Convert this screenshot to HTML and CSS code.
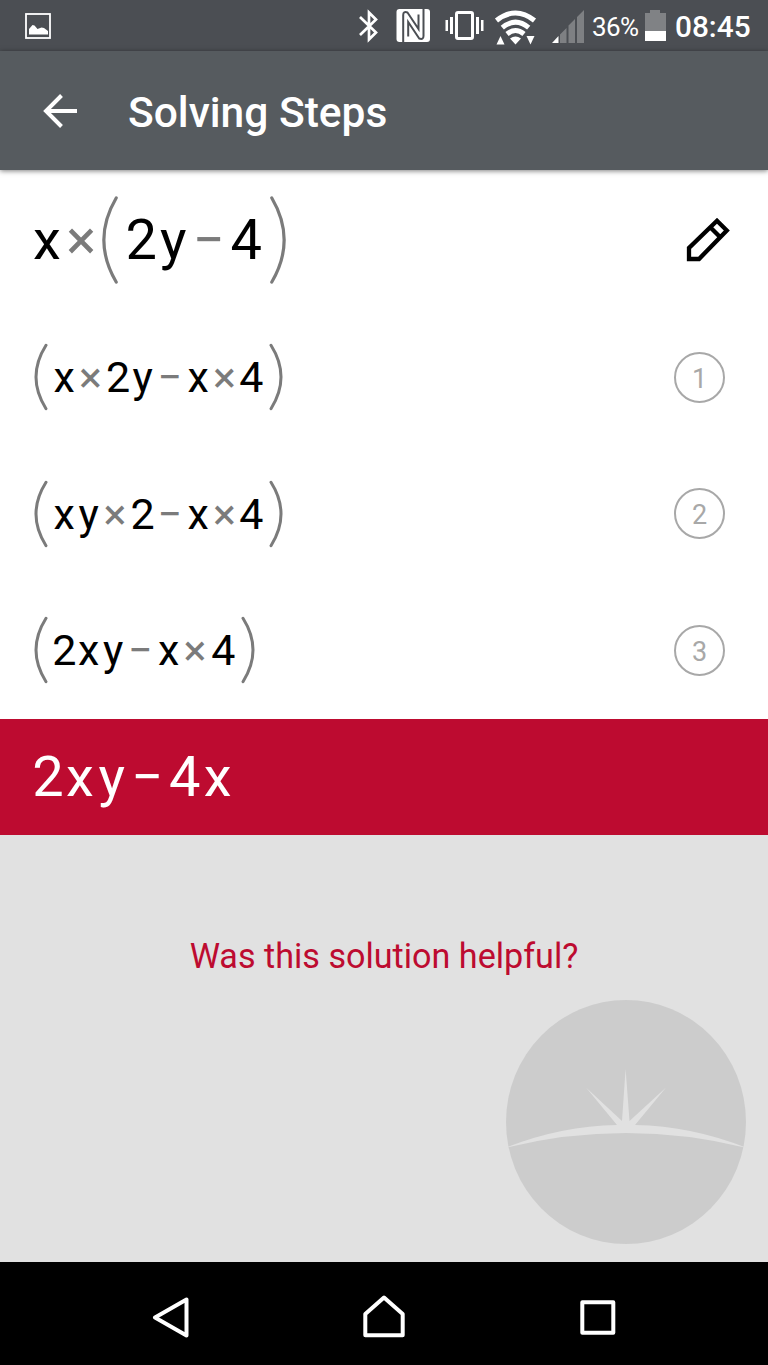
FILE: index.html
```html
<!DOCTYPE html>
<html lang="en">
<head>
<meta charset="utf-8">
<title>Solving Steps</title>
<link rel="stylesheet" href="styles.css">
</head>
<body>
<svg class="defs" width="0" height="0" aria-hidden="true">
  <symbol id="paren" viewBox="0 0 16 88"><path d="M14.2 2Q-10.5 44 14.2 86" fill="none" stroke="currentColor" stroke-width="3.2" stroke-linecap="round"/></symbol>
  <symbol id="paren-small" viewBox="0 0 14 68"><path d="M12 2.300Q-8 34 12 65.700" fill="none" stroke="currentColor" stroke-width="3" stroke-linecap="round"/></symbol>
</svg>
<div class="screen">
  <div class="statusbar">
    <svg class="picture" width="26" height="26" viewBox="0 0 26 26"><rect x="1" y="1" width="24" height="24" fill="none" stroke="#fff" stroke-width="1.8"/><path d="M4 21.500V16l3.500-4 2 .5 3 3.500 4-1.500 2.500.5 4 3v3.500z" fill="#fff"/></svg>
    <svg width="190" height="52" viewBox="350 0 190 52" fill="#fff">
      <path d="M360 17l16 15.500-7 7v-27l7 7-16 15.500" fill="none" stroke="#fff" stroke-width="2.7"/>
      <rect x="396.500" y="9" width="33.500" height="33" rx="3"/>
      <path d="M403.200 42V15Q403.200 11 407.500 12.500L418.500 29V14.500M423.500 9V36Q423.500 40 419.200 38.500L408.200 22V36.500" fill="none" stroke="#4b4e53" stroke-width="2"/>
      <rect x="456.500" y="12.500" width="16" height="26" rx="1.500" fill="none" stroke="#fff" stroke-width="3"/>
      <path d="M450 17h3v17h-3zM445.500 20h2.500v11h-2.500zM476 17h3v17h-3zM481 20h2.500v11h-2.500z"/>
      <g fill="none" stroke="#fff" stroke-width="5">
        <path d="M496.500 20.500Q515.500 5.500 534.500 20.500M502.300 27.700Q515.500 16.700 528.700 27.700M507 34Q515.500 27 524 34"/>
      </g>
      <path d="M510 38.500Q515.500 34.500 521 38.500L515.500 44.500zM496.500 44.500l4-8.500 4 8.500zM526.500 36h8l-4 8.500z"/>
    </svg>
    <svg class="signal" width="32" height="34" viewBox="0 0 32 34"><path d="M8 34V25.500L14.500 19V34zM16.500 34V16.500L23 10V34zM25 34V8L32 1V34z" fill="#7e8083"/><path d="M0 34l6.500-7v7z" fill="#fff"/></svg>
    <span class="percent">36%</span>
    <svg class="battery" width="21" height="31" viewBox="0 0 21 31"><path d="M0 3h5V0h10v3h6v28H0z" fill="#808285"/><path d="M0 21h21v10H0z" fill="#fff"/></svg>
    <span class="clock">08:45</span>
  </div>
  <div class="toolbar">
    <svg width="35" height="34" viewBox="0 0 35 34"><path d="M34 17H3M18.500 1.500L3 17l15.500 15.500" fill="none" stroke="#fff" stroke-width="4"/></svg>
    <h1 class="title">Solving Steps</h1>
  </div>
  <div class="row problem">
    <div class="math large"><span class="t">x</span><span class="t times">×</span><svg class="paren"><use href="#paren"/></svg><span class="t">2</span><span class="t">y</span><span class="t minus">−</span><span class="t four">4</span><svg class="paren close"><use href="#paren"/></svg></div>
    <svg class="pencil" width="44" height="44" viewBox="0 0 44 44" fill="none" stroke="#000" stroke-width="4.300"><path d="M3 41V30L31 2.800L40.800 12.500L13 41zM24.500 9.500l9.500 9.500"/></svg>
  </div>
  <div class="row">
    <div class="math"><svg class="paren"><use href="#paren-small"/></svg><span class="t">x</span><span class="t times">×</span><span class="t digit">2</span><span class="t">y</span><span class="t minus">−</span><span class="t">x</span><span class="t times">×</span><span class="t four">4</span><svg class="paren close"><use href="#paren-small"/></svg></div>
    <div class="step">1</div>
  </div>
  <div class="row">
    <div class="math"><svg class="paren"><use href="#paren-small"/></svg><span class="t">x</span><span class="t">y</span><span class="t times">×</span><span class="t digit">2</span><span class="t minus">−</span><span class="t">x</span><span class="t times">×</span><span class="t four">4</span><svg class="paren close"><use href="#paren-small"/></svg></div>
    <div class="step">2</div>
  </div>
  <div class="row">
    <div class="math"><svg class="paren"><use href="#paren-small"/></svg><span class="t">2</span><span class="t">x</span><span class="t">y</span><span class="t minus">−</span><span class="t">x</span><span class="t times">×</span><span class="t four digit">4</span><svg class="paren close"><use href="#paren-small"/></svg></div>
    <div class="step">3</div>
  </div>
  <div class="row result">
    <div class="math large"><span class="t">2</span><span class="t">x</span><span class="t">y</span><span class="t minus">−</span><span class="t four">4</span><span class="t">x</span></div>
  </div>
  <div class="feedback">
    <div class="question">Was this solution helpful?</div>
    <svg class="logo" width="242" height="246" viewBox="0 0 242 246"><ellipse cx="121" cy="123" rx="120" ry="122" fill="#ccc"/><path d="M0 149Q55 127 112 126L81 88.500 117 122 120.600 70 124.500 122 161 88.500 130 126Q187 127 242 149Q182 134 121 134T0 149z" fill="#e1e1e1"/></svg>
  </div>
  <div class="navbar">
    <svg width="510" height="103" viewBox="130 1262 510 103" fill="none" stroke="#fff" stroke-width="4" stroke-linejoin="round"><path d="M155 1317.500L186.500 1299.500V1335.500zM384 1297.500L402.700 1314V1335.300H365.300V1314z"/><rect x="582.300" y="1302.300" width="31" height="30.500"/></svg>
  </div>
</div>
</body>
</html>
```
FILE: styles.css
```css
* { box-sizing: border-box; }
body { margin: 0; font-family: Roboto, sans-serif; }
svg { display: block; flex: none; }
.defs { position: absolute; }
.screen { width: 768px; height: 1365px; display: flex; flex-direction: column; overflow: hidden; background: #fff; }
.statusbar { height: 51px; flex: none; display: flex; align-items: flex-start; background: #4b4e53; color: #fff; padding-left: 25px; }
.picture { margin: 13px 299px 0 0; }
.signal { margin: 9px 8px 0 12px; }
.percent { font-size: 26px; line-height: 30px; margin-top: 12px; width: 53px; white-space: nowrap; letter-spacing: -.6px; }
.battery { margin: 9.5px 9px 0 0; }
.clock { font-size: 29.800px; font-weight: 500; line-height: 34px; margin-top: 10px; white-space: nowrap; }
.toolbar { height: 119px; flex: none; display: flex; align-items: center; background: #565b5f; padding: 0 0 0 42.500px; box-shadow: 0 1px 5px rgba(0,0,0,.5); z-index: 1; }
.title { margin: 5px 0 0 50.500px; color: #fff; font-size: 42.500px; font-weight: 500; line-height: 50px; white-space: nowrap; }
.row { height: 136.500px; flex: none; display: flex; align-items: center; justify-content: space-between; padding: 0 43px 0 32px; }
.problem { height: 139px; padding: 0 38px 0 31px; }
.math { display: flex; align-items: center; font-size: 43px; line-height: 50px; color: #000; }
.large { font-size: 56px; line-height: 66px; }
.t { width: .57em; display: flex; justify-content: center; }
.times { width: .65em; color: #7b7b7b; }
.minus { width: .72em; color: #7b7b7b; padding-right: .03em; }
.four { width: .6em; }
.digit { margin-left: .035em; }
.paren { width: 14px; height: 68px; margin: 0 4px 0 2px; color: #7b7b7b; }
.close { transform: scaleX(-1); margin: 0 0 0 5px; }
.large .paren { width: 16px; height: 88px; margin: 0 7px 0 3px; }
.large .close { margin: 0 0 0 7px; }
.step { width: 51px; height: 51px; border: 2px solid #a8a8a8; border-radius: 50%; display: flex; align-items: center; justify-content: center; padding-top: 3px; font-size: 27px; color: #a8a8a8; }
.result { height: 116.500px; background: #bd0b30; }
.result .math, .result .minus { color: #fff; }
.feedback { height: 427px; flex: none; background: #e1e1e1; display: flex; flex-direction: column; align-items: flex-end; }
.question { width: 100%; margin-top: 100.500px; text-align: center; color: #bd0b30; font-size: 34.150px; line-height: 40px; white-space: nowrap; }
.logo { margin: 23.500px 21px 0 0; }
.navbar { height: 103px; flex: none; background: #000; padding-left: 130px; }
```
